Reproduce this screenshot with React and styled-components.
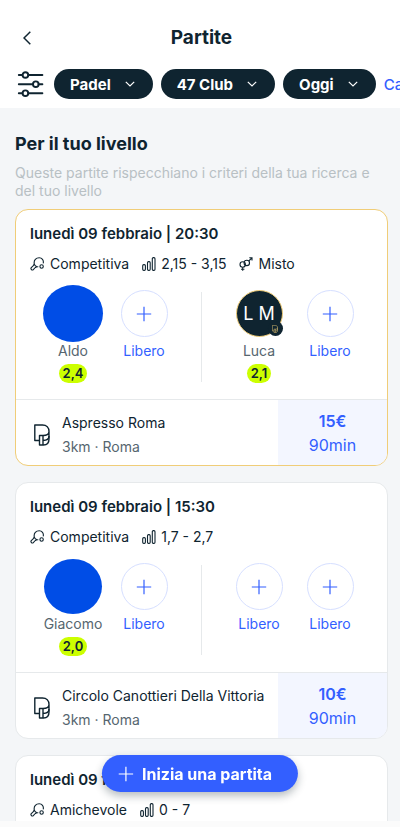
import React from 'react';
import styled, { createGlobalStyle } from 'styled-components';

const GlobalStyle = createGlobalStyle`
  * {
    box-sizing: border-box;
  }

  body {
    margin: 0;
    font-family: Inter, 'Liberation Sans', sans-serif;
    color: #0f2430;
    background: #fbfbfb;
  }

  button {
    margin: 0;
    border: none;
    padding: 0;
    background: none;
    font-family: inherit;
    color: inherit;
    cursor: pointer;
  }

  h1, h2, h3, p {
    margin: 0;
  }

  svg {
    display: block;
    flex: none;
  }
`;

const Page = styled.div`
  display: flex;
  flex-direction: column;
  height: 100vh;
  padding-bottom: 6px;
`;

const Header = styled.header`
  flex: none;
  padding-top: 20px;
  background: #fff;
`;

const TitleBar = styled.div`
  display: grid;
  grid-template-columns: 40px 1fr 40px;
  align-items: center;
  height: 35px;
  padding: 0 4px 0 7px;
`;

const BackButton = styled.button`
  display: flex;
  justify-content: center;
  align-items: center;
  height: 32px;
`;

const Title = styled.h1`
  font-size: 19px;
  line-height: 24px;
  font-weight: 700;
  text-align: center;
`;

const Filters = styled.div`
  display: flex;
  align-items: center;
  gap: 8px;
  height: 53px;
  padding: 5px 0 0 17px;
  overflow: hidden;
`;

const SettingsButton = styled.button`
  flex: none;
  margin-right: 2px;
`;

const Pill = styled.button`
  display: flex;
  flex: none;
  align-items: center;
  gap: 14px;
  height: 30px;
  padding: 0 18px 0 16px;
  border-radius: 15px;
  background: #0f2430;
  color: #fff;
  font-size: 15px;
  font-weight: 700;
`;

const FilterLink = styled.a`
  flex: none;
  color: #335fff;
  font-size: 15px;
  font-weight: 500;
  text-decoration: none;
`;

const List = styled.main`
  flex: 1;
  min-height: 0;
  padding: 24px 12px 0 15px;
  overflow-y: auto;
  scrollbar-width: none;
  background: #f4f6f8;
`;

const SectionTitle = styled.h2`
  font-size: 18px;
  line-height: 24px;
  font-weight: 700;
`;

const SectionText = styled.p`
  margin: 8px 0 9px;
  color: #b8c0c4;
  font-size: 14px;
  line-height: 18px;
`;

const Card = styled.article`
  margin-bottom: 16px;
  border: 1px solid ${props => (props.$highlighted ? '#f0cd78' : '#e6e9eb')};
  border-radius: 13px;
  overflow: hidden;
  background: #fff;
`;

const Match = styled.div`
  padding: 14px 14px 0;
`;

const MatchDate = styled.h3`
  font-size: 15px;
  line-height: 20px;
  font-weight: 600;
`;

const Facts = styled.div`
  display: flex;
  gap: 13px;
  margin-top: 10px;
`;

const Fact = styled.span`
  display: flex;
  align-items: center;
  gap: 5px;
  font-size: 14px;
  line-height: 20px;
`;

const Teams = styled.div`
  display: flex;
  align-items: center;
  height: 125px;
`;

const Team = styled.div`
  display: flex;
  flex: 1;
  justify-content: center;
  height: 93px;
`;

const Divider = styled.div`
  width: 1px;
  height: 90px;
  background: #e6e9eb;
`;

const Player = styled.div`
  display: flex;
  flex-direction: column;
  align-items: center;
  width: 71px;
`;

const Slot = styled.span`
  position: relative;
  display: flex;
  flex: none;
  justify-content: center;
  align-items: center;
  width: 47px;
  height: 47px;
`;

const Photo = styled.span`
  flex: none;
  width: ${props => props.$width}px;
  height: ${props => props.$height}px;
  border-radius: 50%;
  background: #004de6;
`;

const FreeSlot = styled(Slot)`
  border: 1px solid #d6dfff;
  border-radius: 50%;
  color: #335fff;
`;

const Initials = styled(Slot)`
  border: 1px solid #f0cd78;
  border-radius: 50%;
  background: #0f2430;
  color: #fff;
  font-size: 18px;
`;

const PremiumBadge = styled.span`
  position: absolute;
  right: -1px;
  bottom: 0;
  display: flex;
  justify-content: center;
  align-items: center;
  width: 15px;
  height: 15px;
  border-radius: 50%;
  background: #0f2430;
  color: #f0cd78;
`;

const PlayerName = styled.span`
  margin-top: 4px;
  color: ${props => (props.$free ? '#335fff' : '#56666f')};
  font-size: 14px;
  line-height: 20px;
`;

const Level = styled.span`
  margin-top: 3px;
  padding: 0 4px;
  border-radius: 10px;
  background: #ccff00;
  font-size: 13px;
  line-height: 19px;
  font-weight: 600;
`;

const CardFooter = styled.div`
  display: flex;
  height: 66px;
  border-top: 1px solid #e6e9eb;
`;

const Club = styled.div`
  display: flex;
  flex: 1;
  align-items: center;
  gap: 12px;
  min-width: 0;
  padding: 4px 0 0 18px;
`;

const ClubName = styled.div`
  font-size: 14px;
  line-height: 24px;
  white-space: nowrap;
`;

const ClubPlace = styled(ClubName)`
  color: #56666f;
`;

const BookButton = styled.button`
  flex: none;
  width: 109px;
  background: #f3f6ff;
  color: #335fff;
  font-size: 16px;
  line-height: 24px;
`;

const Price = styled.div`
  font-weight: 600;
`;

const StartButton = styled.button`
  position: fixed;
  bottom: 35px;
  left: 50%;
  display: flex;
  align-items: center;
  gap: 8px;
  height: 37px;
  padding: 0 26px 0 16px;
  border-radius: 19px;
  background: #335fff;
  box-shadow: 0 4px 8px rgba(15, 36, 48, 0.3);
  color: #fff;
  font-size: 16px;
  font-weight: 700;
  white-space: nowrap;
  transform: translateX(-50%);
`;

function ChevronDown() {
  return (
    <svg width="10" height="6" viewBox="0 0 10 6" fill="none" stroke="currentColor" strokeWidth="1.2">
      <path d="M.8.8 5 5 9.2.8" />
    </svg>
  );
}

function PlusIcon() {
  return (
    <svg width="16" height="16" viewBox="0 0 16 16" fill="none" stroke="currentColor" strokeWidth="1.2">
      <path d="M8 .8v14.4M.8 8h14.4" />
    </svg>
  );
}

function SettingsIcon() {
  return (
    <svg width="27" height="28" viewBox="0 0 27 28" fill="none" stroke="currentColor" strokeWidth="1.9" strokeLinecap="round">
      <path d="M1.8 5h3.6M11.6 5h13.8M1.8 14.2h14.2M21.6 14.2h3.8M1.8 23.2h3.6M11.6 23.2h13.8" />
      <circle cx="8.4" cy="5" r="2.8" />
      <circle cx="18.8" cy="14.2" r="2.8" />
      <circle cx="8.4" cy="23.2" r="2.8" />
    </svg>
  );
}

function RacketIcon() {
  return (
    <svg width="15" height="14" viewBox="0 0 15 14" fill="none" stroke="currentColor" strokeWidth="1.1" strokeLinejoin="round">
      <path d="M13.2 6.4C14 3.3 11.9.8 9.2.8 6 .8 3.8 3.3 4.2 6.2c.2 1.5-.4 2-1.400 3L1.300 10.700c-1.100 1.200.8 3.200 2 2l2-2.200c.8-.8 1.400-.8 3-.7" />
      <path d="M4.200 6.800c.4 1.700 1.300 2.500 2.800 3" />
      <circle cx="11.6" cy="9.5" r="1.7" />
    </svg>
  );
}

function LevelIcon() {
  return (
    <svg width="14" height="14" viewBox="0 0 14 14" fill="none" stroke="currentColor" strokeWidth="1.1">
      <rect x=".7" y="7.6" width="2.7" height="5.8" rx="1.1" />
      <rect x="5.5" y="4.6" width="2.7" height="8.8" rx="1.1" />
      <rect x="10.3" y=".6" width="2.7" height="12.8" rx="1.1" />
    </svg>
  );
}

function MixedIcon() {
  return (
    <svg width="14" height="14" viewBox="0 0 14 14" fill="none" stroke="currentColor" strokeWidth="1.1">
      <circle cx="3.7" cy="7.5" r="2.7" />
      <circle cx="7.8" cy="5.9" r="2.7" />
      <path d="M3.7 10.200v3.600M2 12.200h3.400M9.700 4 13 .8M10.300.8H13v2.600" />
    </svg>
  );
}

function ClubLogo({ width, height }) {
  return (
    <svg width={width} height={height} viewBox="0 0 16 22" fill="none" stroke="currentColor" strokeWidth="1.4" strokeLinejoin="round">
      <path d="M5.500 16.500H.8V1h7.700c4 0 6.500 2.500 6.500 6.500V15c0 3.500-1.800 6-5.500 6h-4v-9.500H9c3.400 0 6-1.200 6-4" />
      <path d="M9 11.500V21M9 16.500c3.400 0 6-1.200 6-4.500" />
    </svg>
  );
}

const matches = [
  {
    date: 'lunedì 09 febbraio | 20:30',
    kind: 'Competitiva',
    levels: '2,15 - 3,15',
    mixed: true,
    highlighted: true,
    teams: [
      [{ name: 'Aldo', level: '2,4', photo: [60, 57] }, null],
      [{ name: 'Luca', level: '2,1', initials: 'L M' }, null],
    ],
    club: 'Aspresso Roma',
    place: '3km · Roma',
    price: '15€',
    duration: '90min',
  },
  {
    date: 'lunedì 09 febbraio | 15:30',
    kind: 'Competitiva',
    levels: '1,7 - 2,7',
    teams: [
      [{ name: 'Giacomo', level: '2,0', photo: [58, 55] }, null],
      [null, null],
    ],
    club: 'Circolo Canottieri Della Vittoria',
    place: '3km · Roma',
    price: '10€',
    duration: '90min',
  },
  {
    date: 'lunedì 09 febbraio | 18:30',
    kind: 'Amichevole',
    levels: '0 - 7',
    teams: [
      [null, null],
      [null, null],
    ],
    club: 'Aspresso Roma',
    place: '3km · Roma',
    price: '15€',
    duration: '90min',
  },
];

function PlayerSlot({ player }) {
  if (!player) {
    return (
      <Player as="button" type="button">
        <FreeSlot>
          <PlusIcon />
        </FreeSlot>
        <PlayerName $free>Libero</PlayerName>
      </Player>
    );
  }

  return (
    <Player>
      {player.photo ? (
        <Slot>
          <Photo $width={player.photo[0]} $height={player.photo[1]} />
        </Slot>
      ) : (
        <Initials>
          {player.initials}
          <PremiumBadge>
            <ClubLogo width={6} height={8} />
          </PremiumBadge>
        </Initials>
      )}
      <PlayerName>{player.name}</PlayerName>
      <Level>{player.level}</Level>
    </Player>
  );
}

function MatchCard({ match }) {
  return (
    <Card $highlighted={match.highlighted}>
      <Match>
        <MatchDate>{match.date}</MatchDate>
        <Facts>
          <Fact>
            <RacketIcon />
            {match.kind}
          </Fact>
          <Fact>
            <LevelIcon />
            {match.levels}
          </Fact>
          {match.mixed && (
            <Fact>
              <MixedIcon />
              Misto
            </Fact>
          )}
        </Facts>
      </Match>
      <Teams>
        {match.teams.map((team, teamIndex) => (
          <React.Fragment key={teamIndex}>
            {teamIndex > 0 && <Divider />}
            <Team>
              {team.map((player, index) => <PlayerSlot key={index} player={player} />)}
            </Team>
          </React.Fragment>
        ))}
      </Teams>
      <CardFooter>
        <Club>
          <ClubLogo width={16} height={22} />
          <div>
            <ClubName>{match.club}</ClubName>
            <ClubPlace>{match.place}</ClubPlace>
          </div>
        </Club>
        <BookButton type="button">
          <Price>{match.price}</Price>
          <div>{match.duration}</div>
        </BookButton>
      </CardFooter>
    </Card>
  );
}

function App() {
  return (
    <Page>
      <GlobalStyle />
      <Header>
        <TitleBar>
          <BackButton type="button" aria-label="Indietro">
            <svg width="8" height="14" viewBox="0 0 8 14" fill="none" stroke="currentColor" strokeWidth="1.5">
              <path d="M7.3.7 1 7l6.300 6.300" />
            </svg>
          </BackButton>
          <Title>Partite</Title>
        </TitleBar>
        <Filters>
          <SettingsButton type="button" aria-label="Filtri">
            <SettingsIcon />
          </SettingsButton>
          {['Padel', '47 Club', 'Oggi'].map(label => (
            <Pill key={label} type="button">
              {label}
              <ChevronDown />
            </Pill>
          ))}
          <FilterLink href="#campi">Campi</FilterLink>
        </Filters>
      </Header>
      <List>
        <SectionTitle>Per il tuo livello</SectionTitle>
        <SectionText>
          Queste partite rispecchiano i criteri della tua ricerca e del tuo livello
        </SectionText>
        {matches.map(match => <MatchCard key={match.date} match={match} />)}
      </List>
      <StartButton type="button">
        <PlusIcon />
        Inizia una partita
      </StartButton>
    </Page>
  );
}

export default App;
